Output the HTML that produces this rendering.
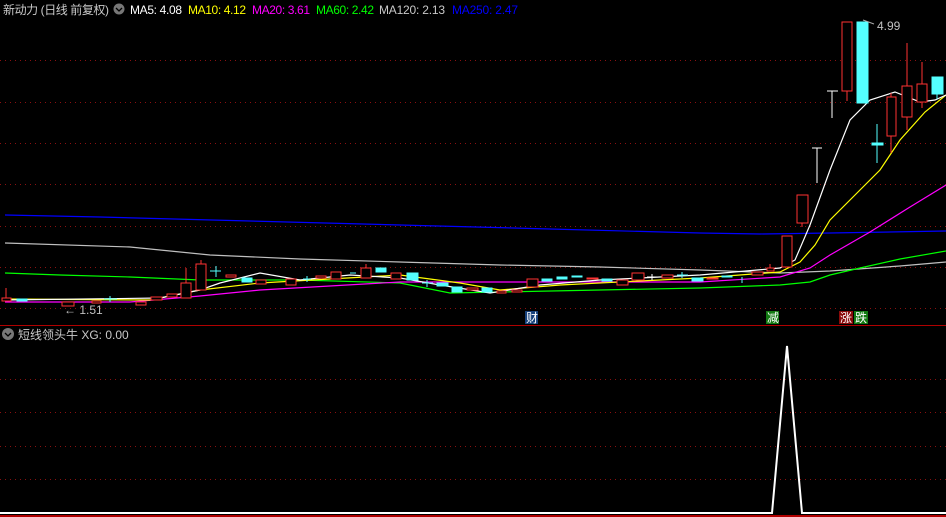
<!DOCTYPE html>
<html><head><meta charset="utf-8"><style>
html,body{margin:0;padding:0;background:#000;width:946px;height:517px;overflow:hidden}
svg{display:block}
text{font-family:"Liberation Sans","Noto Sans CJK SC",sans-serif;font-size:12px}
</style></head><body>
<svg width="946" height="517" viewBox="0 0 946 517" xmlns="http://www.w3.org/2000/svg">
<rect width="946" height="517" fill="#000"/>
<g stroke="#8a1010" stroke-width="1" stroke-dasharray="1,4">
<line x1="0" y1="60.5" x2="946" y2="60.5"/><line x1="0" y1="102.5" x2="946" y2="102.5"/>
<line x1="0" y1="143.5" x2="946" y2="143.5"/><line x1="0" y1="184.5" x2="946" y2="184.5"/>
<line x1="0" y1="226.5" x2="946" y2="226.5"/><line x1="0" y1="267.5" x2="946" y2="267.5"/>
<line x1="0" y1="308.5" x2="946" y2="308.5"/>
<line x1="0" y1="379.5" x2="946" y2="379.5"/><line x1="0" y1="412.5" x2="946" y2="412.5"/>
<line x1="0" y1="446.5" x2="946" y2="446.5"/><line x1="0" y1="479.5" x2="946" y2="479.5"/>
</g>
<line x1="0" y1="325.5" x2="946" y2="325.5" stroke="#b00000"/>
<line x1="0" y1="516" x2="946" y2="516" stroke="#b00000" stroke-width="2"/>
<g fill="none" stroke-width="1.2">
<polyline stroke="#0000ff" points="5,215 100,217 250,221 400,225 550,229 700,233 760,234 830,233 946,231"/>
<polyline stroke="#c0c0c0" points="5,243 130,247 210,255 300,259 400,262 500,265 600,267 700,270 780,273 830,271 900,266 946,262"/>
<polyline stroke="#00ff00" points="5,273 60,275 130,277 200,280 300,280 400,283 450,293 500,292 600,290 700,288 780,285 810,282 830,275 860,268 900,259 946,251"/>
<polyline stroke="#ff00ff" points="5,302 130,302 200,296 260,290 400,282 500,282 700,282 780,277 810,268 830,255 870,232 910,207 946,185"/>
<polyline stroke="#ffff00" points="5,299 150,300 200,290 260,283 400,275 460,283 500,290 560,285 700,278 780,272 800,262 815,245 830,220 860,190 880,170 900,140 925,112 946,95"/>
<polyline stroke="#ffffff" points="5,300 160,298 200,290 220,283 260,273 300,280 350,275 400,278 440,285 490,293 540,285 600,280 700,275 780,268 795,260 810,225 830,170 850,120 870,100 895,92 920,102 935,100 946,95"/>
</g>
<g stroke="#ff3232" fill="#000" stroke-width="1" shape-rendering="crispEdges">
<line x1="6" y1="288" x2="6" y2="298"/><rect x="2" y="298" width="9" height="3"/>
<rect x="62" y="302" width="12" height="4"/><rect x="92" y="301" width="9" height="2"/>
<rect x="136" y="302" width="10" height="3"/><rect x="151" y="297" width="11" height="3"/>
<rect x="167" y="294" width="10" height="3"/>
<line x1="186" y1="268" x2="186" y2="283"/><rect x="181" y="283" width="10" height="15"/>
<line x1="201" y1="260" x2="201" y2="264"/><rect x="196" y="264" width="10" height="26"/>
<rect x="226" y="275" width="10" height="2"/><rect x="256" y="280" width="10" height="4"/>
<rect x="286" y="279" width="10" height="6"/><rect x="316" y="276" width="10" height="2"/>
<rect x="331" y="272" width="10" height="7"/>
<line x1="366" y1="264" x2="366" y2="268"/><rect x="361" y="268" width="10" height="10"/>
<rect x="391" y="273" width="10" height="6"/><rect x="467" y="288" width="11" height="2"/>
<rect x="497" y="291" width="9" height="2"/><rect x="512" y="290" width="10" height="2"/>
<rect x="527" y="279" width="11" height="8"/><rect x="587" y="278" width="11" height="1"/>
<rect x="617" y="280" width="11" height="5"/><rect x="632" y="273" width="12" height="7"/>
<rect x="662" y="275" width="11" height="3"/><rect x="707" y="278" width="11" height="1"/>
<rect x="752" y="272" width="11" height="3"/>
<line x1="770" y1="264" x2="770" y2="268"/><rect x="767" y="268" width="7" height="3"/>
<rect x="782" y="236" width="10" height="31"/>
<line x1="802" y1="223" x2="802" y2="227"/><rect x="797" y="195" width="11" height="28"/>
<line x1="847" y1="91" x2="847" y2="101"/><rect x="842" y="22" width="10" height="69"/>
<line x1="891" y1="93" x2="891" y2="153"/><rect x="887" y="97" width="9" height="39"/>
<line x1="907" y1="43" x2="907" y2="130"/><rect x="902" y="86" width="10" height="31"/>
<line x1="922" y1="62" x2="922" y2="108"/><rect x="917" y="84" width="10" height="18"/>
</g>
<g fill="#54ffff" stroke="#54ffff" stroke-width="1" shape-rendering="crispEdges">
<rect x="17" y="299" width="10" height="2"/>
<line x1="104" y1="299" x2="117" y2="299"/><line x1="110" y1="296" x2="110" y2="302"/>
<line x1="210" y1="271" x2="221" y2="271"/><line x1="216" y1="266" x2="216" y2="277"/>
<rect x="242" y="278" width="10" height="4"/>
<line x1="303" y1="279" x2="311" y2="279"/><line x1="307" y1="276" x2="307" y2="282"/>
<line x1="350" y1="273" x2="356" y2="273"/>
<rect x="376" y="268" width="10" height="4"/><rect x="407" y="273" width="11" height="7"/>
<line x1="422" y1="283" x2="433" y2="283"/><line x1="427" y1="280" x2="427" y2="287"/>
<rect x="437" y="283" width="11" height="3"/><rect x="452" y="287" width="10" height="5"/>
<rect x="482" y="288" width="10" height="4"/><rect x="542" y="279" width="10" height="2"/>
<rect x="557" y="277" width="10" height="2"/><rect x="572" y="276" width="10" height="1"/>
<rect x="602" y="279" width="10" height="2"/>
<line x1="677" y1="275" x2="688" y2="275"/><line x1="682" y1="272" x2="682" y2="278"/>
<rect x="692" y="278" width="11" height="3"/><rect x="722" y="276" width="10" height="1"/>
<line x1="742" y1="277" x2="742" y2="283"/>
<rect x="857" y="22" width="11" height="81"/>
<rect x="872" y="143" width="11" height="2"/><line x1="877" y1="124" x2="877" y2="163"/>
<line x1="937" y1="94" x2="937" y2="99"/><rect x="932" y="77" width="11" height="17"/>
</g>
<g stroke="#fff" stroke-width="1" shape-rendering="crispEdges">
<line x1="647" y1="277" x2="657" y2="277"/><line x1="652" y1="274" x2="652" y2="280"/>
<line x1="812" y1="148" x2="822" y2="148"/><line x1="817" y1="148" x2="817" y2="183"/>
<line x1="827" y1="91" x2="838" y2="91"/><line x1="832" y1="91" x2="832" y2="118"/>
</g>
<line x1="863" y1="20" x2="874" y2="24" stroke="#aaa"/>
<text x="877" y="30" fill="#c0c0c0">4.99</text>
<text x="64" y="314" fill="#c0c0c0">← 1.51</text>
<rect x="525" y="311" width="13" height="13" fill="#16407a"/><text x="526" y="322" fill="#fff">财</text>
<rect x="766" y="311" width="13" height="13" fill="#127a12"/><text x="767" y="322" fill="#fff">减</text>
<rect x="839" y="311" width="14" height="13" fill="#8a0a0a"/><text x="840" y="322" fill="#fff">涨</text>
<rect x="854" y="311" width="14" height="13" fill="#127a12"/><text x="855" y="322" fill="#fff">跌</text>
<text x="3" y="14" fill="#c8c8c8" textLength="106">新动力 (日线 前复权)</text>
<circle cx="119" cy="9" r="5.5" fill="#777"/><path d="M116 8 L119 11 L122 8" stroke="#000" fill="none" stroke-width="1.3"/>
<text x="130" y="14" fill="#fff" textLength="52">MA5: 4.08</text>
<text x="188" y="14" fill="#ffff00" textLength="58">MA10: 4.12</text>
<text x="252" y="14" fill="#ff00ff" textLength="58">MA20: 3.61</text>
<text x="316" y="14" fill="#00ff00" textLength="58">MA60: 2.42</text>
<text x="379" y="14" fill="#c8c8c8" textLength="66">MA120: 2.13</text>
<text x="452" y="14" fill="#0000ff" textLength="66">MA250: 2.47</text>
<circle cx="8" cy="334" r="6" fill="#777"/><path d="M5 333 L8 336 L11 333" stroke="#000" fill="none" stroke-width="1.3"/>
<text x="18" y="339" fill="#c8c8c8">短线领头牛  XG: 0.00</text>
<polyline fill="none" stroke="#fff" stroke-width="2" points="0,513 772,513 787,346 802,513 946,513"/>
</svg>
</body></html>
